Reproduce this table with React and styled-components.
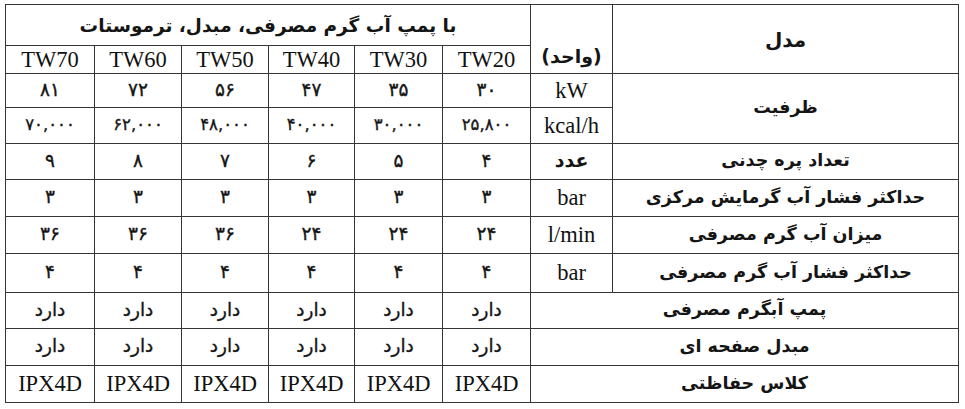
import React from 'react';
import styled, { createGlobalStyle } from 'styled-components';

const GlobalStyle = createGlobalStyle`
  html, body {
    margin: 0;
    padding: 0;
    background: #fff;
  }
`;

const Page = styled.div`
  padding: 4px 8px 0 5px;
  background: #fff;
`;

const Table = styled.table`
  direction: rtl;
  border-collapse: collapse;
  table-layout: fixed;
  width: 953px;
  color: #151515;

  td, th {
    border: 1.5px solid #353535;
    padding: 0;
    text-align: center;
    vertical-align: middle;
    overflow: hidden;
    white-space: nowrap;
  }
`;

const Col = styled.col`
  width: ${props => props.$w}px;
`;

const Row = styled.tr`
  height: ${props => props.$h}px;
`;

const Label = styled.td`
  font-family: "DejaVu Sans", sans-serif;
  font-weight: bold;
  font-size: 17.5px;
  letter-spacing: -0.8px;
  padding-bottom: 3px !important;
`;

const HeadTitle = styled.th`
  font-family: "DejaVu Sans", sans-serif;
  font-weight: bold;
  font-size: ${props => props.$size || 18.5}px;
  letter-spacing: -1px;
  padding-top: 1px !important;
`;

const UnitHead = styled.th`
  font-family: "DejaVu Sans", sans-serif;
  font-weight: bold;
  font-size: 19px;
  letter-spacing: -0.5px;
  vertical-align: bottom !important;
  padding-bottom: 6px !important;
`;

const Latin = styled.td`
  font-family: "Liberation Serif", "Times New Roman", serif;
  font-size: 22.5px;
  font-weight: normal;
  color: #111;
`;

const ModelCell = styled(Latin).attrs({ as: 'th' })`
  font-weight: normal;
  padding-top: 1px !important;
`;

const Persian = styled.td`
  font-family: "DejaVu Sans", sans-serif;
  font-size: ${props => props.$size || 18}px;
  font-weight: ${props => (props.$bold ? 'bold' : 'normal')};
  -webkit-text-stroke: ${props => (props.$bold ? 0 : 0.35)}px #151515;
  padding-bottom: 3px !important;
`;

const widths = [346, 82, 88, 88, 86, 87, 87, 89];

const models = ['TW20', 'TW30', 'TW40', 'TW50', 'TW60', 'TW70'];

const rows = [
  { label: 'ظرفیت', labelSpan: 2, unit: 'kW', latinUnit: true, values: ['۳۰', '۳۵', '۴۷', '۵۶', '۷۲', '۸۱'], h: 34 },
  { unit: 'kcal/h', latinUnit: true, values: ['۲۵,۸۰۰', '۳۰,۰۰۰', '۴۰,۰۰۰', '۴۸,۰۰۰', '۶۲,۰۰۰', '۷۰,۰۰۰'], h: 36, small: true },
  { label: 'تعداد پره چدنی', unit: 'عدد', values: ['۴', '۵', '۶', '۷', '۸', '۹'], h: 36 },
  { label: 'حداکثر فشار آب گرمایش مرکزی', unit: 'bar', latinUnit: true, values: ['۳', '۳', '۳', '۳', '۳', '۳'], h: 37 },
  { label: 'میزان آب گرم مصرفی', unit: 'l/min', latinUnit: true, values: ['۲۴', '۲۴', '۲۴', '۳۶', '۳۶', '۳۶'], h: 37 },
  { label: 'حداکثر فشار آب گرم مصرفی', unit: 'bar', latinUnit: true, values: ['۴', '۴', '۴', '۴', '۴', '۴'], h: 39 },
  { label: 'پمپ آبگرم مصرفی', values: Array(6).fill('دارد'), h: 36 },
  { label: 'مبدل صفحه ای', values: Array(6).fill('دارد'), h: 37 },
  { label: 'کلاس حفاظتی', values: Array(6).fill('IPX4D'), latinValues: true, h: 37 },
];

function ValueCell({ row, value }) {
  if (row.latinValues) return <Latin>{value}</Latin>;
  return <Persian $size={row.small ? 16.5 : 18.5}>{value}</Persian>;
}

export default function App() {
  return (
    <Page>
      <GlobalStyle />
      <Table>
        <colgroup>
          {widths.map((w, i) => (
            <Col key={i} $w={w} />
          ))}
        </colgroup>
        <thead>
          <Row $h={41}>
            <HeadTitle rowSpan={2} $size={20}>مدل</HeadTitle>
            <UnitHead rowSpan={2}>(واحد)</UnitHead>
            <HeadTitle colSpan={6}>با پمپ آب گرم مصرفی، مبدل، ترموستات</HeadTitle>
          </Row>
          <Row $h={28}>
            {models.map(m => (
              <ModelCell key={m}>{m}</ModelCell>
            ))}
          </Row>
        </thead>
        <tbody>
          {rows.map((r, i) => (
            <Row key={i} $h={r.h}>
              {r.label && (
                <Label rowSpan={r.labelSpan || 1} colSpan={r.unit ? 1 : 2}>
                  {r.label}
                </Label>
              )}
              {r.unit &&
                (r.latinUnit ? (
                  <Latin>{r.unit}</Latin>
                ) : (
                  <Persian $bold $size={19}>{r.unit}</Persian>
                ))}
              {r.values.map((v, j) => (
                <ValueCell key={j} row={r} value={v} />
              ))}
            </Row>
          ))}
        </tbody>
      </Table>
    </Page>
  );
}
